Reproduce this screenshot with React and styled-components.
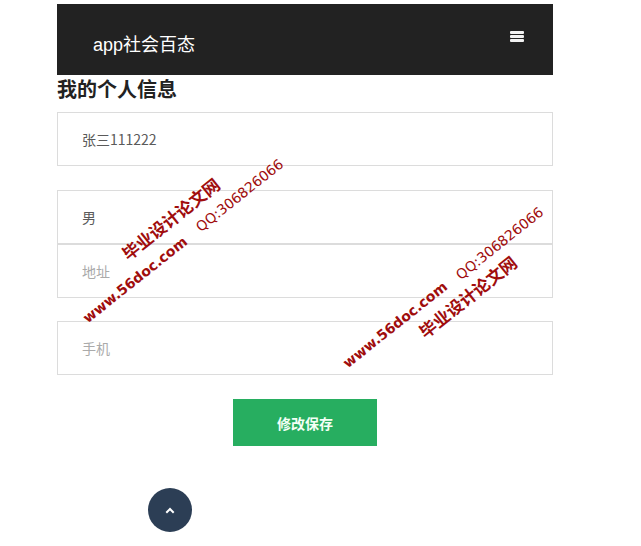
import styled, { createGlobalStyle } from 'styled-components';

const GlobalStyle = createGlobalStyle`
  html, body {
    margin: 0;
    padding: 0;
    background: #fff;
  }
  body {
    font-family: "Noto Sans CJK SC", "Noto Sans", sans-serif;
  }
`;

const fields = [
  { value: '张三111222', placeholder: '姓名', gap: 0 },
  { value: '男', placeholder: '性别', gap: 24 },
  { value: '', placeholder: '地址', gap: 0 },
  { value: '', placeholder: '手机', gap: 23 },
];

const watermarks = [
  { text: '毕业设计论文网', x: 129, y: 262, kind: 'cn' },
  { text: 'QQ:306826066', x: 202, y: 235, kind: 'qq' },
  { text: 'www.56doc.com', x: 89, y: 326, kind: 'url' },
  { text: 'www.56doc.com', x: 349, y: 371, kind: 'url' },
  { text: 'QQ:306826066', x: 462, y: 283, kind: 'qq' },
  { text: '毕业设计论文网', x: 426, y: 340, kind: 'cn' },
];

export default function App() {
  return (
    <>
      <GlobalStyle />
      <Page>
        <Container>
          <NavBar>
            <Brand>app社会百态</Brand>
            <MenuButton aria-label="menu">
              <Bar />
              <Bar />
              <Bar />
            </MenuButton>
          </NavBar>

          <Title>我的个人信息</Title>

          <Form>
            {fields.map((f) => (
              <Field key={f.placeholder} gap={f.gap}>
                <Input defaultValue={f.value} placeholder={f.placeholder} />
              </Field>
            ))}
            <SaveButton type="button">修改保存</SaveButton>
          </Form>
        </Container>

        {watermarks.map((w, i) => (
          <Watermark
            key={i}
            kind={w.kind}
            style={{ left: w.x, top: w.y - (w.kind === 'cn' ? 17 : 15) }}
          >
            {w.text}
          </Watermark>
        ))}

        <BackToTop aria-label="back to top">
          <svg width="10" height="7" viewBox="0 0 10 7" fill="none">
            <path d="M2 5L5 2L8 5" stroke="#fff" strokeWidth="2" strokeLinecap="square" />
          </svg>
        </BackToTop>
      </Page>
    </>
  );
}

const Page = styled.div`
  position: relative;
  width: 641px;
  min-height: 546px;
  padding-top: 4px;
  box-sizing: border-box;
`;

const Container = styled.div`
  width: 496px;
  margin-left: 57px;
`;

const NavBar = styled.div`
  height: 71px;
  background: #222222;
  display: flex;
  align-items: center;
  justify-content: space-between;
  padding: 0 29px 0 36px;
  box-sizing: border-box;
`;

const Brand = styled.div`
  color: #fff;
  font-size: 18px;
  font-family: "Liberation Sans", "Noto Sans CJK SC", sans-serif;
  margin-top: 6px;
`;

const MenuButton = styled.div`
  display: flex;
  flex-direction: column;
  gap: 1px;
  width: 14px;
  margin-top: -6px;
`;

const Bar = styled.span`
  display: block;
  height: 3px;
  background: #f2f2f2;
  border-radius: 1px;
`;

const Title = styled.h2`
  margin: 0;
  padding-top: 2px;
  height: 35px;
  font-size: 20px;
  line-height: 24px;
  font-weight: bold;
  color: #222;
  font-family: "Noto Sans CJK SC", sans-serif;
`;

const Form = styled.div`
  display: flex;
  flex-direction: column;
`;

const Field = styled.div`
  margin-top: ${({ gap }) => gap}px;
`;

const Input = styled.input`
  display: block;
  width: 100%;
  height: 54px;
  box-sizing: border-box;
  border: 1px solid #dcdcdc;
  background: #fff;
  padding: 0 24px;
  font-size: 14px;
  color: #5a5a5a;
  font-family: "Noto Sans CJK SC", sans-serif;
  outline: none;

  &::placeholder {
    color: #aaa;
  }
`;

const SaveButton = styled.button`
  align-self: flex-start;
  margin: 24px 0 0 176px;
  width: 144px;
  height: 47px;
  border: none;
  background: #27ae60;
  color: #f4fff6;
  font-size: 14px;
  font-weight: bold;
  font-family: "Noto Sans CJK SC", sans-serif;
  cursor: pointer;
`;

const Watermark = styled.div`
  position: absolute;
  white-space: nowrap;
  line-height: 1;
  color: #a00d0d;
  transform: rotate(-38.5deg);
  transform-origin: 0 100%;
  pointer-events: none;
  font-family: ${({ kind }) =>
    kind === 'cn' ? '"Noto Sans CJK SC", sans-serif' : '"DejaVu Sans", sans-serif'};
  font-size: ${({ kind }) => (kind === 'cn' ? 17 : 14)}px;
  font-weight: ${({ kind }) => (kind === 'qq' ? 'normal' : 'bold')};
`;

const BackToTop = styled.div`
  position: absolute;
  left: 148px;
  top: 488px;
  width: 44px;
  height: 44px;
  border-radius: 50%;
  background: #2c3e55;
  display: flex;
  align-items: center;
  justify-content: center;
`;
